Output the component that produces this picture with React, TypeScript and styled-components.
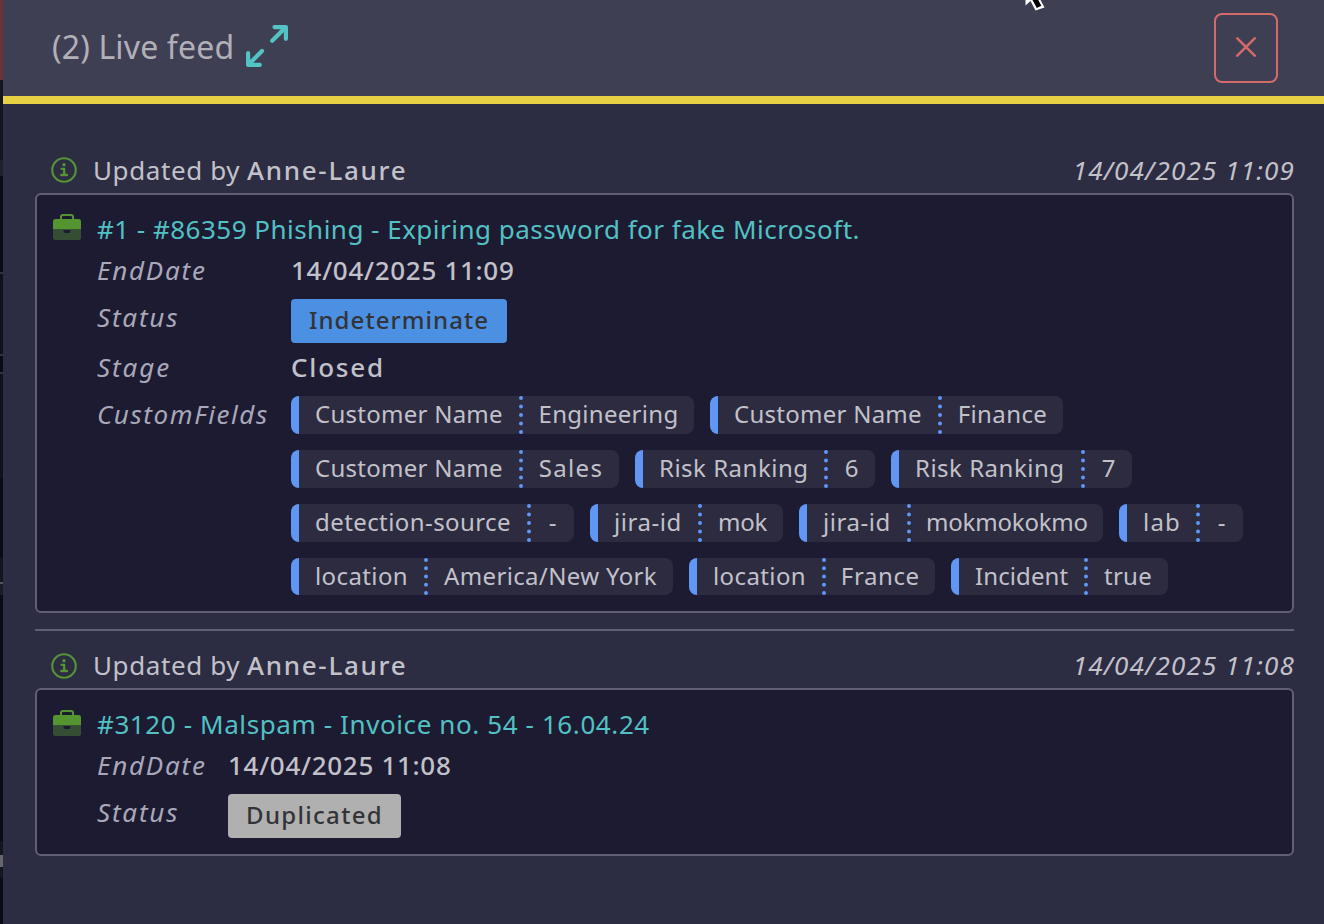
import React from "react";
import styled, { createGlobalStyle } from "styled-components";

const GlobalStyle = createGlobalStyle`
  * { box-sizing: border-box; }
  body {
    margin: 0;
    overflow: hidden;
    background: #2c2c42;
    color: #c2c1ca;
    font-family: "Noto Sans", "Open Sans", sans-serif;
    font-size: 26px;
    line-height: 34px;
  }
`;

const Screen = styled.div`
  position: relative;
  display: flex;
  width: 1324px;
  height: 924px;
  overflow: hidden;
`;

const PageEdge = styled.div`
  display: flex;
  flex-direction: column;
  flex: 0 0 3px;
`;

const EdgeBand = styled.div<{ $height: number; $color: string }>`
  flex: 0 0 ${(p) => p.$height}px;
  background: ${(p) => p.$color};
`;

const Drawer = styled.section`
  flex: 1;
  min-width: 0;
  background: #2c2c42;
`;

const DrawerHeader = styled.header`
  display: flex;
  align-items: center;
  height: 104px;
  padding: 0 46px 0 49px;
  background: #3f3f54;
  border-bottom: 8px solid #e8d044;
`;

const Title = styled.h1`
  flex: 0 0 194px;
  margin: -3px 0 0;
  color: #b1b0b8;
  font-size: 32px;
  font-weight: 400;
  line-height: 44px;
  letter-spacing: 0.15px;
  white-space: nowrap;
`;

const ExpandIcon = styled.svg`
  width: 42px;
  height: 42px;
  margin-top: -4px;
`;

const CloseButton = styled.button`
  display: flex;
  align-items: center;
  justify-content: center;
  width: 64px;
  height: 70px;
  margin-left: auto;
  padding: 0 0 2px;
  border: 2px solid #d46a6a;
  border-radius: 8px;
  background: transparent;
`;

const Feed = styled.main`
  padding: 49px 30px 0 32px;
`;

const Entry = styled.article`
  & + & {
    margin-top: 16px;
    padding-top: 17px;
    border-top: 2px solid #605f76;
  }

  & + & svg {
    transform: translateY(1px);
  }
`;

const EntryHeader = styled.div`
  display: flex;
  height: 40px;
  padding-left: 16px;
`;

const InfoIcon = styled.svg`
  width: 26px;
  height: 26px;
  margin: 4px 16px 0 0;
`;

const Author = styled.div`
  display: flex;
  white-space: nowrap;
`;

const Action = styled.span`
  width: 154px;
  letter-spacing: 0.6px;
`;

const Name = styled.span`
  font-weight: 500;
  letter-spacing: 1.7px;
`;

const Time = styled.time`
  margin-left: auto;
  margin-right: -1px;
  font-style: italic;
  letter-spacing: 1.15px;
`;

const Card = styled.div`
  display: flex;
  padding: 17px 14px 16px 16px;
  border: 2px solid #605f76;
  border-radius: 6px;
  background: #1c1b32;
`;

const CaseIcon = styled.svg`
  flex: none;
  width: 28px;
  height: 26px;
  margin: 2px 16px 0 0;
`;

const CardBody = styled.div`
  flex: 1;
  min-width: 0;
`;

const CaseLink = styled.div<{ $tracking: number }>`
  height: 41px;
  color: #53c1c3;
  letter-spacing: ${(p) => p.$tracking}px;
  white-space: nowrap;
`;

const Field = styled.div<{ $labelWidth: number; $height?: number }>`
  display: grid;
  grid-template-columns: ${(p) => p.$labelWidth}px 1fr;
  min-height: ${(p) => (p.$height ? p.$height + "px" : "0")};
  align-items: start;
`;

const Label = styled.span<{ $tracking: number; $drop?: boolean }>`
  color: #a9a8b9;
  font-style: italic;
  letter-spacing: ${(p) => p.$tracking}px;
  padding-top: ${(p) => (p.$drop ? 1 : 0)}px;
`;

const Value = styled.span<{ $tracking: number }>`
  font-weight: 500;
  letter-spacing: ${(p) => p.$tracking}px;
`;

const Status = styled.span<{ $color: string; $width: number; $tracking: number }>`
  width: ${(p) => p.$width}px;
  height: 44px;
  border-radius: 4px;
  background: ${(p) => p.$color};
  color: #333437;
  font-size: 24px;
  font-weight: 500;
  line-height: 41px;
  text-align: center;
  letter-spacing: ${(p) => p.$tracking}px;
`;

const Tags = styled.div`
  display: flex;
  flex-wrap: wrap;
  gap: 16px;
`;

const Tag = styled.span`
  display: flex;
  height: 38px;
  border-radius: 8px;
  overflow: hidden;
  background: #2c2b40;
  font-size: 24px;
  line-height: 35px;
  white-space: nowrap;

  &:nth-last-child(-n + 3) {
    height: 37px;
  }
`;

const TagKey = styled.span<{ $width: number; $tracking: number }>`
  width: ${(p) => p.$width}px;
  padding-left: 16px;
  border-left: 8px solid #6097f5;
  letter-spacing: ${(p) => p.$tracking}px;
`;

const TagValue = styled.span<{ $width: number; $tracking: number }>`
  width: ${(p) => p.$width}px;
  border-left: 4px dotted #6097f5;
  letter-spacing: ${(p) => p.$tracking}px;
  text-align: center;
`;

const Pointer = styled.svg`
  position: absolute;
  left: 1022px;
  top: 0;
  width: 28px;
  height: 14px;
`;

type TagPart = { text: string; width: number; tracking: number };

const part = (text: string, width: number, tracking: number): TagPart => ({ text, width, tracking });

const customFields: [TagPart, TagPart][] = [
  [part("Customer Name", 228, 0.26), part("Engineering", 175, 0.3)],
  [part("Customer Name", 228, 0.26), part("Finance", 125, 0.4)],
  [part("Customer Name", 228, 0.26), part("Sales", 100, 1.3)],
  [part("Risk Ranking", 189, 0.5), part("6", 51, 0)],
  [part("Risk Ranking", 190, 0.5), part("7", 51, 0)],
  [part("detection-source", 236, 0.42), part("-", 47, 0)],
  [part("jira-id", 108, 0.55), part("mok", 85, -0.3)],
  [part("jira-id", 108, 0.55), part("mokmokokmo", 196, -0.2)],
  [part("lab", 77, 1.2), part("-", 47, 0)],
  [part("location", 133, 0.4), part("America/New York", 249, 0.35)],
  [part("location", 132.5, 0.4), part("France", 113.5, 0.6)],
  [part("Incident", 133, 0.1), part("true", 84, 0.3)],
];

const edgeBands: [number, string][] = [
  [80, "#6d3436"],
  [80, "#15151e"],
  [16, "#20202a"],
  [96, "#0b0b18"],
  [2, "#32323e"],
  [80, "#11111d"],
  [2, "#32323e"],
  [16, "#0b0b18"],
  [2, "#32323e"],
  [104, "#11111d"],
  [80, "#0b0b18"],
  [24, "#15151e"],
  [2, "#55555b"],
  [11, "#1c1c25"],
  [246, "#0b0b18"],
  [14, "#15151e"],
  [12, "#66666a"],
  [11, "#15151e"],
  [46, "#0b0b18"],
];

function EntryTop({ time }: { time: string }) {
  return (
    <EntryHeader>
      <InfoIcon viewBox="0 0 26 26" fill="none" stroke="#549431" strokeWidth="2.1">
        <circle cx="13" cy="13" r="11.8" />
        <circle cx="13" cy="7.7" r="1.7" fill="#549431" stroke="none" />
        <path d="M10.6 11.8h2.6v6.100M10.200 18h5.800" strokeWidth="2.300" strokeLinecap="round" strokeLinejoin="round" />
      </InfoIcon>
      <Author>
        <Action>Updated by</Action>
        <Name>Anne-Laure</Name>
      </Author>
      <Time>{time}</Time>
    </EntryHeader>
  );
}

function Briefcase() {
  return (
    <CaseIcon viewBox="0 0 28 26">
      <path d="M8 6V3q0-2 2-2h8q2 0 2 2v3" fill="none" stroke="#549431" strokeWidth="2" />
      <path d="M2.5 5h23Q28 5 28 7.5V15.5H0V7.5Q0 5 2.5 5Z" fill="#549431" />
      <path d="M0 15.5H10.5V17Q10.5 19 12.5 19H15.5Q17.5 19 17.5 17V15.5H28V23.5Q28 26 25.5 26H2.5Q0 26 0 23.5Z" fill="#344e34" />
    </CaseIcon>
  );
}

export default function App() {
  return (
    <>
      <GlobalStyle />
      <Screen>
        <PageEdge>
          {edgeBands.map(([height, color], i) => (
            <EdgeBand key={i} $height={height} $color={color} />
          ))}
        </PageEdge>
        <Drawer>
          <DrawerHeader>
            <Title>(2) Live feed</Title>
            <ExpandIcon viewBox="0 0 42 42" fill="none" stroke="#53c3c6" strokeWidth="4.2" strokeLinecap="round" strokeLinejoin="round">
              <path d="M28.5 2.1H39.9V13.8M39.5 2.5L26.2 15.8" />
              <path d="M2.1 28.2V39.9H13.8M2.500 39.5L16 26" />
            </ExpandIcon>
            <CloseButton aria-label="Close">
              <svg width="20" height="20" viewBox="0 0 20 20" stroke="#d46a6a" strokeWidth="2.5" strokeLinecap="round">
                <path d="M1.3 1.3L18.7 18.7M18.7 1.3L1.3 18.7" />
              </svg>
            </CloseButton>
          </DrawerHeader>
          <Feed>
            <Entry>
              <EntryTop time="14/04/2025 11:09" />
              <Card>
                <Briefcase />
                <CardBody>
                  <CaseLink $tracking={0.48}>#1 - #86359 Phishing - Expiring password for fake Microsoft.</CaseLink>
                  <Field $labelWidth={194} $height={46}>
                    <Label $tracking={1.8}>EndDate</Label>
                    <Value $tracking={0.7}>14/04/2025 11:09</Value>
                  </Field>
                  <Field $labelWidth={194} $height={51}>
                    <Label $tracking={1.8} $drop>Status</Label>
                    <Status $color="#4b90e2" $width={216} $tracking={1.07}>Indeterminate</Status>
                  </Field>
                  <Field $labelWidth={194} $height={46}>
                    <Label $tracking={1.9}>Stage</Label>
                    <Value $tracking={1.8}>Closed</Value>
                  </Field>
                  <Field $labelWidth={194}>
                    <Label $tracking={1.6} $drop>CustomFields</Label>
                    <Tags>
                      {customFields.map(([key, value], i) => (
                        <Tag key={i}>
                          <TagKey $width={key.width} $tracking={key.tracking}>{key.text}</TagKey>
                          <TagValue $width={value.width} $tracking={value.tracking}>{value.text}</TagValue>
                        </Tag>
                      ))}
                    </Tags>
                  </Field>
                </CardBody>
              </Card>
            </Entry>
            <Entry>
              <EntryTop time="14/04/2025 11:08" />
              <Card>
                <Briefcase />
                <CardBody>
                  <CaseLink $tracking={0.6}>#3120 - Malspam - Invoice no. 54 - 16.04.24</CaseLink>
                  <Field $labelWidth={131} $height={46}>
                    <Label $tracking={1.8}>EndDate</Label>
                    <Value $tracking={0.7}>14/04/2025 11:08</Value>
                  </Field>
                  <Field $labelWidth={131}>
                    <Label $tracking={1.8} $drop>Status</Label>
                    <Status $color="#b0b0b0" $width={173} $tracking={1.3}>Duplicated</Status>
                  </Field>
                </CardBody>
              </Card>
            </Entry>
          </Feed>
        </Drawer>
        <Pointer viewBox="0 0 28 14">
          <path d="M3.5 0V5.5L8.5 1L13.5 10.5L22.5 7.5L18.5 0Z" fill="#fff" />
          <path d="M10.5 0L14.8 8L19.3 5.8L16.3 0Z" fill="#000" />
        </Pointer>
      </Screen>
    </>
  );
}
